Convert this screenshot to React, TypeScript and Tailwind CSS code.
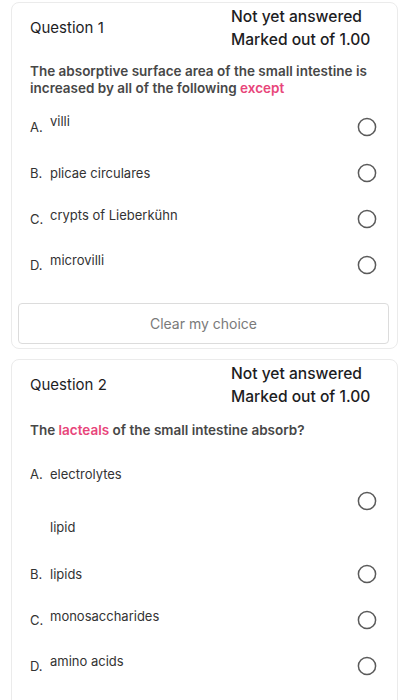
import React from 'react'

const font = { fontFamily: 'Inter, "Liberation Sans", sans-serif' }

interface Option {
  letter: string
  text: string
  extra?: string
  shift?: string
}

function Radio() {
  return (
    <svg width="20" height="20" viewBox="0 0 20 20" className="shrink-0">
      <circle cx="10" cy="10" r="8.6" fill="white" stroke="#5a5a5a" strokeWidth="1.5" />
    </svg>
  )
}

function OptionRow({ option }: { option: Option }) {
  return (
    <div className={`flex items-center justify-between pt-[13px] ${option.extra ? 'pb-[15px]' : 'pb-[13px]'}`}>
      <div className="flex flex-col">
        <div className="flex items-center text-[13px] leading-[17px] text-[#333]">
          <span className="w-[20px]">{option.letter}</span>
          <span className={option.shift || ''}>{option.text}</span>
        </div>
        {option.extra && (
          <div className="mt-[36px] pl-[20px] text-[13px] leading-[17px] text-[#333]">{option.extra}</div>
        )}
      </div>
      <Radio />
    </div>
  )
}

function Header({ n }: { n: number }) {
  return (
    <div className="grid grid-cols-[201px_1fr] items-center pt-[2px]">
      <div className="text-[15px] text-[#1d1d1f]">Question {n}</div>
      <div className="text-[15.6px] font-medium leading-[23px] text-[#1d1d1f]">
        <div>Not yet answered</div>
        <div>Marked out of 1.00</div>
      </div>
    </div>
  )
}

export default function App() {
  const q1: Option[] = [
    { letter: 'A.', text: 'villi', shift: '-mt-[12px]' },
    { letter: 'B.', text: 'plicae circulares' },
    { letter: 'C.', text: 'crypts of Lieberkühn', shift: '-mt-[7px]' },
    { letter: 'D.', text: 'microvilli', shift: '-mt-[9px]' },
  ]
  const q2: Option[] = [
    { letter: 'A.', text: 'electrolytes', extra: 'lipid' },
    { letter: 'B.', text: 'lipids' },
    { letter: 'C.', text: 'monosaccharides', shift: '-mt-[8px]' },
    { letter: 'D.', text: 'amino acids', shift: '-mt-[9px]' },
  ]

  return (
    <div className="min-h-[700px] bg-white pl-[11px] pr-[10px] pt-[2px]" style={font}>
      <div className="rounded-lg border border-[#ebebeb] pb-[4px]">
        <div className="pl-[18px] pr-[20px]">
          <Header n={1} />
          <p className="mt-[12px] text-[13.5px] font-semibold leading-[17px] text-[#474747]">
            The absorptive surface area of the small intestine is increased by all of the following{' '}
            <span className="text-[#e8457a]">except</span>
          </p>
          <div className="mt-[7px]">
            {q1.map((o) => (
              <OptionRow key={o.letter} option={o} />
            ))}
          </div>
        </div>
        <button className="ml-[6px] mr-[8px] mt-[15px] block h-[41px] w-[371px] rounded-[4px] border border-[#dcdcdc] text-[14px] text-[#7a7a7a]">
          Clear my choice
        </button>
      </div>

      <div className="mt-[10px] rounded-lg border border-[#ebebeb] pb-[20px]">
        <div className="pl-[18px] pr-[20px]">
          <Header n={2} />
          <p className="mt-[14px] text-[13.5px] font-semibold leading-[17px] text-[#474747]">
            The <span className="text-[#e8457a]">lacteals</span> of the small intestine absorb?
          </p>
          <div className="mt-[14px]">
            {q2.map((o) => (
              <OptionRow key={o.letter} option={o} />
            ))}
          </div>
        </div>
      </div>
    </div>
  )
}
